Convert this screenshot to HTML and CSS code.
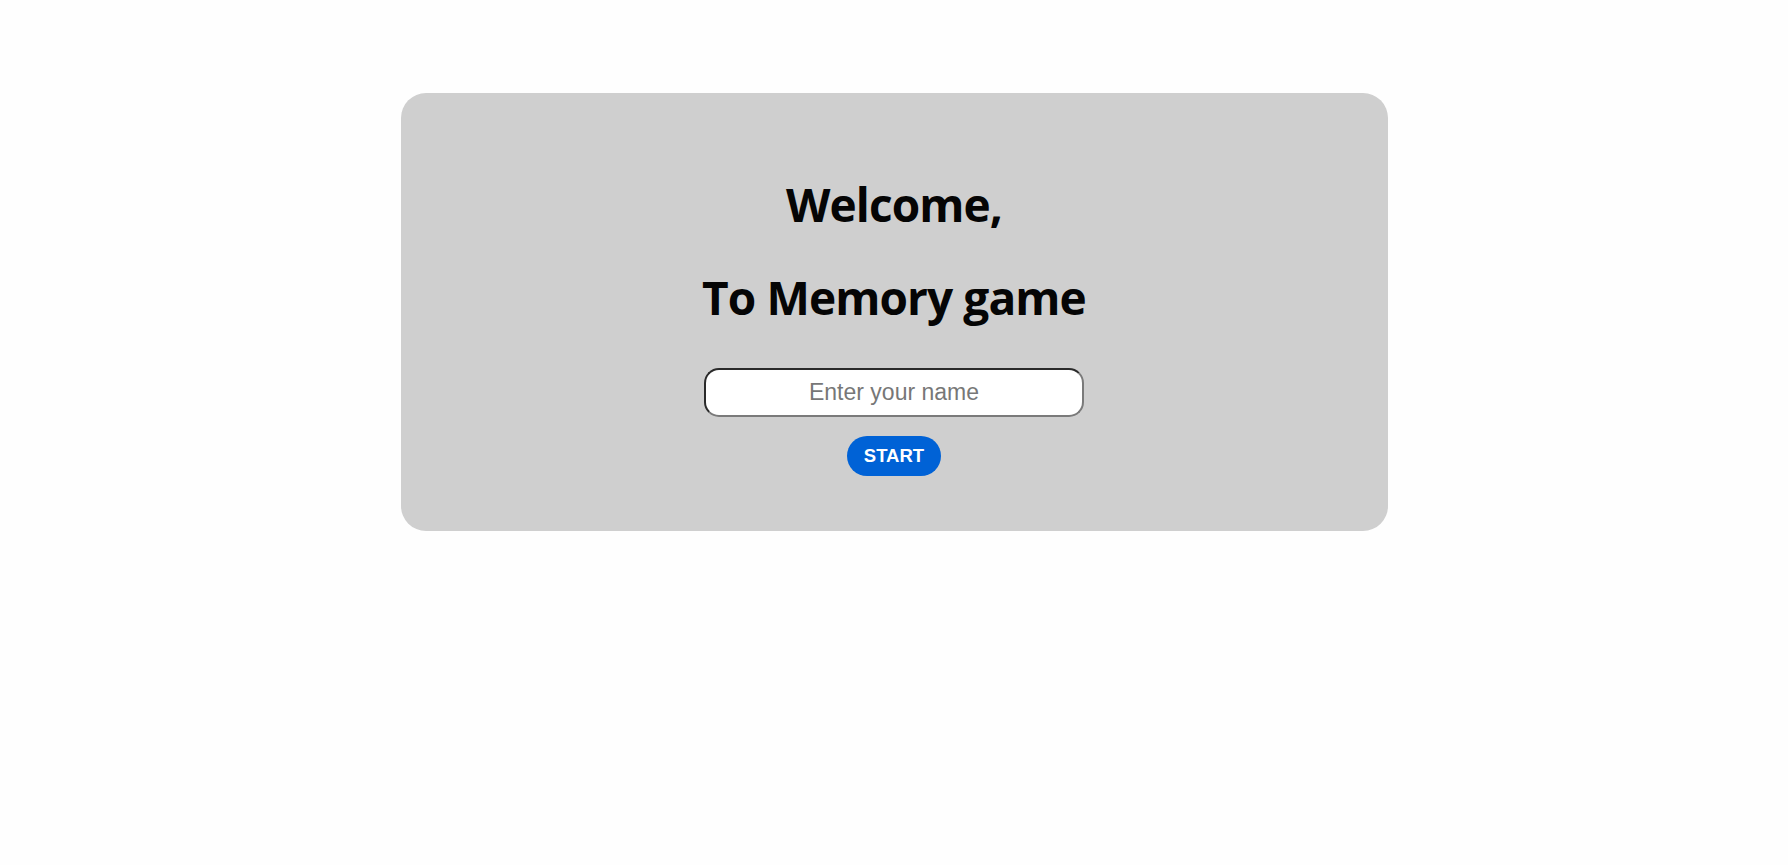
FILE: index.html
```html
<!DOCTYPE html>
<html lang="en">
<head>
<meta charset="utf-8">
<title>Memory game</title>
<link rel="stylesheet" href="styles.css">
</head>
<body>
  <main class="page">
    <section class="card">
      <h1 class="title">Welcome,</h1>
      <h1 class="title title-second">To Memory game</h1>
      <input class="name-input" type="text" placeholder="Enter your name">
      <button class="start-btn" type="button">START</button>
    </section>
  </main>
</body>
</html>
```

FILE: styles.css
```css
html, body {
  margin: 0;
  padding: 0;
  background: #fefefe;
}

.page {
  padding-top: 93px;
  display: flex;
  justify-content: center;
}

.card {
  width: 987px;
  box-sizing: border-box;
  background: #cfcfcf;
  border-radius: 25px;
  padding: 81px 0 55px;
  display: flex;
  flex-direction: column;
  align-items: center;
}

.title {
  margin: 0;
  font-family: "Open Sans", sans-serif;
  font-weight: 700;
  font-size: 46px;
  letter-spacing: -0.9px;
  line-height: 60px;
  color: #050505;
}

.title-second {
  margin-top: 33px;
}

.name-input {
  margin-top: 41px;
  width: 380px;
  height: 49px;
  box-sizing: border-box;
  border: 2px solid;
  border-color: #2a2a2a #7a7a7a #7a7a7a #2a2a2a;
  border-radius: 15px;
  background: #fff;
  font-family: "Liberation Sans", Arial, sans-serif;
  font-size: 23px;
  text-align: center;
  outline: none;
}

.name-input::placeholder {
  color: #777;
}

.start-btn {
  margin-top: 19px;
  height: 40px;
  padding: 0 17px;
  border: none;
  border-radius: 20px;
  background: #0062d6;
  color: #fff;
  font-family: "Liberation Sans", Arial, sans-serif;
  font-weight: 700;
  font-size: 18.5px;
}
```
